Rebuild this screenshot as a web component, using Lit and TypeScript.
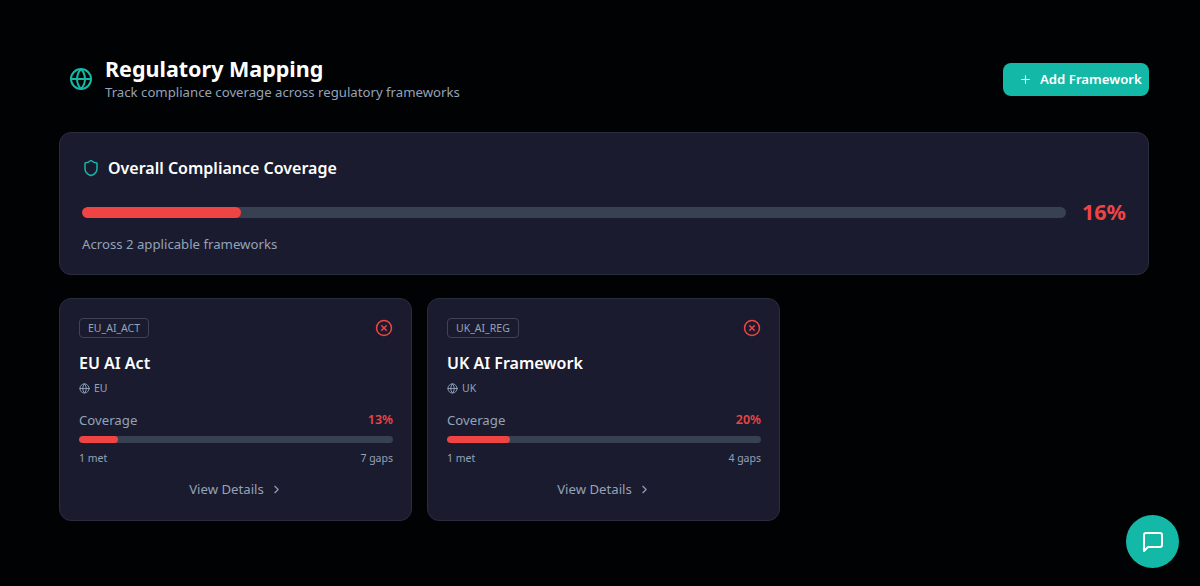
import { LitElement, html, css, svg } from "lit";
import { customElement } from "lit/decorators.js";

const globe = svg`<circle cx="12" cy="12" r="10"/><path d="M2 12h20"/><path d="M12 2a15.3 15.3 0 0 1 4 10 15.3 15.3 0 0 1-4 10 15.3 15.3 0 0 1-4-10 15.3 15.3 0 0 1 4-10z"/>`;

const frameworks = [
  { code: "EU_AI_ACT", name: "EU AI Act", region: "EU", pct: 13, width: 12.5, met: "1 met", gaps: "7 gaps" },
  { code: "UK_AI_REG", name: "UK AI Framework", region: "UK", pct: 20, width: 20, met: "1 met", gaps: "4 gaps" },
];

@customElement("app-root")
export class AppRoot extends LitElement {
  static styles = css`
    :host { display: block; width: 1200px; height: 586px; background: #010204; overflow: hidden; position: relative;
      font-family: "Noto Sans", "Open Sans", sans-serif; color: #fff; }
    svg { fill: none; stroke: currentColor; stroke-linecap: round; stroke-linejoin: round; display: block; flex: none; }
    .page { padding: 56px 51px 0 59px; display: flex; flex-direction: column; }
    .head { display: flex; align-items: center; justify-content: space-between; height: 44px; }
    .head-left { display: flex; align-items: center; gap: 12px; padding-left: 10px; }
    .head-icon { width: 24px; height: 24px; color: #14b8a6; stroke-width: 2; margin-top: 2px; }
    h1 { margin: 0; font-size: 21.5px; line-height: 28px; font-weight: 700; }
    .sub { font-size: 13.2px; line-height: 18px; color: #94a3b8; }
    .add { display: flex; align-items: center; gap: 8px; width: 146px; height: 33px; box-sizing: border-box; padding-left: 16px;
      border-radius: 8px; background: #14b8a6; font-size: 13.2px; font-weight: 600; margin-top: 2px; }
    .add svg { width: 13px; height: 13px; stroke-width: 2; }
    .panel { background: #1a1b2e; border: 1px solid #2a2d3e; border-radius: 12px; box-sizing: border-box; }
    .overall { margin-top: 32px; height: 143px; padding: 23px 22px; }
    .ov-title { display: flex; align-items: center; gap: 8px; font-size: 16px; line-height: 24px; font-weight: 600; }
    .ov-title svg { width: 18px; height: 18px; color: #14b8a6; stroke-width: 2; }
    .ov-bar { display: flex; align-items: center; gap: 16px; margin-top: 16px; height: 32px; }
    .track { background: #374151; border-radius: 999px; overflow: hidden; flex: 1; }
    .fill { height: 100%; background: #ef4444; border-radius: 999px; }
    .ov-bar .track { height: 11px; }
    .ov-pct { font-size: 21.5px; font-weight: 700; color: #ef4444; line-height: 32px; }
    .ov-note { margin-top: 6px; font-size: 13.2px; line-height: 20px; color: #94a3b8; }
    .cards { display: grid; grid-template-columns: 353px 353px; gap: 15px; margin-top: 23px; }
    .card { height: 223px; padding: 19px 18px 0 19px; }
    .card-top { display: flex; justify-content: space-between; align-items: center; height: 20px; }
    .badge { font-size: 10.5px; line-height: 18px; color: #94a3b8; border: 1px solid #3f4356; border-radius: 4px; padding: 0 8px; }
    .x { width: 18px; height: 18px; color: #ef4444; stroke-width: 2; }
    h3 { margin: 13px 0 0; font-size: 16px; line-height: 24px; font-weight: 600; }
    .region { display: flex; align-items: center; gap: 4px; margin-top: 5px; font-size: 10.5px; line-height: 16px; color: #94a3b8; }
    .region svg { width: 11px; height: 11px; stroke-width: 2; }
    .cov { display: flex; justify-content: space-between; margin-top: 14px; font-size: 13.2px; line-height: 20px; color: #94a3b8; }
    .cov b { color: #ef4444; font-weight: 600; font-size: 12.5px; }
    .card .track { height: 7px; margin-top: 6px; flex: none; }
    .nums { display: flex; justify-content: space-between; margin-top: 7px; font-size: 10.5px; line-height: 16px; color: #94a3b8; }
    .view { display: flex; align-items: center; justify-content: center; gap: 6px; margin-top: 13px; height: 20px; font-size: 13.2px; color: #94a3b8; }
    .view svg { width: 13px; height: 13px; stroke-width: 2; }
    .chat { position: absolute; left: 1126px; top: 515px; width: 53px; height: 53px; border-radius: 50%; background: #14b8a6;
      display: flex; align-items: center; justify-content: center; }
    .chat svg { width: 24px; height: 24px; stroke-width: 2; }
  `;

  render() {
    return html`
      <div class="page">
        <header class="head">
          <div class="head-left">
            <svg class="head-icon" viewBox="0 0 24 24">${globe}</svg>
            <div>
              <h1>Regulatory Mapping</h1>
              <div class="sub">Track compliance coverage across regulatory frameworks</div>
            </div>
          </div>
          <div class="add">
            <svg viewBox="0 0 24 24"><path d="M5 12h14"/><path d="M12 5v14"/></svg>
            <span>Add Framework</span>
          </div>
        </header>
        <section class="panel overall">
          <div class="ov-title">
            <svg viewBox="0 0 24 24"><path d="M20 13c0 5-3.5 7.5-7.66 8.95a1 1 0 0 1-.67-.01C7.5 20.5 4 18 4 13V6a1 1 0 0 1 1-1c2 0 4.5-1.2 6.24-2.72a1.17 1.17 0 0 1 1.52 0C14.51 3.81 17 5 19 5a1 1 0 0 1 1 1z"/></svg>
            <span>Overall Compliance Coverage</span>
          </div>
          <div class="ov-bar">
            <div class="track"><div class="fill" style="width:16.2%"></div></div>
            <div class="ov-pct">16%</div>
          </div>
          <div class="ov-note">Across 2 applicable frameworks</div>
        </section>
        <div class="cards">
          ${frameworks.map((f) => html`
            <article class="panel card">
              <div class="card-top">
                <span class="badge">${f.code}</span>
                <svg class="x" viewBox="0 0 24 24"><circle cx="12" cy="12" r="10"/><path d="m15 9-6 6"/><path d="m9 9 6 6"/></svg>
              </div>
              <h3>${f.name}</h3>
              <div class="region"><svg viewBox="0 0 24 24">${globe}</svg><span>${f.region}</span></div>
              <div class="cov"><span>Coverage</span><b>${f.pct}%</b></div>
              <div class="track"><div class="fill" style="width:${f.width}%"></div></div>
              <div class="nums"><span>${f.met}</span><span>${f.gaps}</span></div>
              <div class="view"><span>View Details</span><svg viewBox="0 0 24 24"><path d="m9 18 6-6-6-6"/></svg></div>
            </article>
          `)}
        </div>
      </div>
      <div class="chat">
        <svg viewBox="0 0 24 24"><path d="M21 15a2 2 0 0 1-2 2H7l-4 4V5a2 2 0 0 1 2-2h14a2 2 0 0 1 2 2z"/></svg>
      </div>
    `;
  }
}
